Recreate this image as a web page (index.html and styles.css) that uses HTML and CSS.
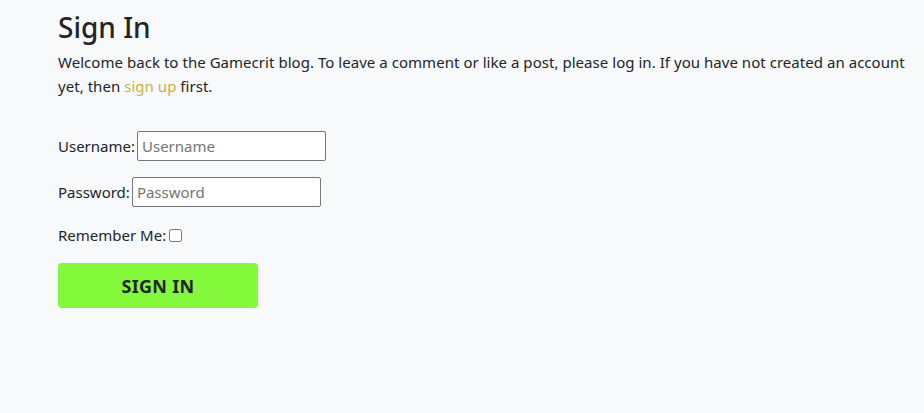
FILE: index.html
```html
<!DOCTYPE html>
<html lang="en">
<head>
<meta charset="utf-8">
<title>Sign In</title>
<link rel="stylesheet" href="styles.css">
</head>
<body>
<main class="page">
  <h2 class="title">Sign In</h2>
  <p class="intro">Welcome back to the Gamecrit blog. To leave a comment or like a post, please log in. If you have not created an account yet, then <a class="link" href="#">sign up</a> first.</p>
  <form class="login">
    <p class="field"><label for="u">Username:</label> <input class="text" id="u" type="text" placeholder="Username"></p>
    <p class="field"><label for="p">Password:</label> <input class="text" id="p" type="password" placeholder="Password"></p>
    <p class="field check"><label for="r">Remember Me:</label> <input class="box" id="r" type="checkbox"></p>
    <button class="btn" type="button">SIGN IN</button>
  </form>
</main>
</body>
</html>
```
FILE: styles.css
```css
html, body {
  margin: 0;
  padding: 0;
  background: #f8f9fa;
}
body {
  font-family: "Noto Sans", "Open Sans", sans-serif;
  font-size: 15px;
  line-height: 24px;
  color: #212529;
}
.page {
  padding: 10px 0 0 58px;
  width: 855px;
}
.title {
  margin: 0 0 6px;
  font-size: 28px;
  line-height: 34px;
  font-weight: 500;
}
.intro {
  margin: 0 0 33px;
  letter-spacing: 0.04px;
}
.link {
  color: #c4b73c;
  text-decoration: none;
}
.field {
  margin: 0 0 16px;
  display: flex;
  align-items: center;
  gap: 2px;
}
.text {
  width: 189px;
  height: 30px;
  box-sizing: border-box;
  border: 1px solid #767676;
  border-radius: 2px;
  padding: 1px 4px;
  font: inherit;
  background: #fff;
  color: #212529;
}
.text::placeholder {
  color: #757575;
}
.box {
  margin: 0 0 0 1px;
  width: 13px;
  height: 13px;
}
.btn {
  display: block;
  margin-top: 16px;
  width: 200px;
  height: 45px;
  border: none;
  border-radius: 4px;
  background: #84f83a;
  color: #212529;
  font-family: inherit;
  font-weight: 700;
  font-size: 18px;
  letter-spacing: 0.3px;
}
```
